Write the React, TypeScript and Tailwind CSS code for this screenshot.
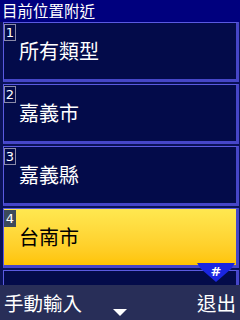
import React from "react";

const rows = [
  { n: "1", label: "所有類型" },
  { n: "2", label: "嘉義市" },
  { n: "3", label: "嘉義縣" },
  { n: "4", label: "台南市", active: true },
];

const font = { fontFamily: '"Noto Sans CJK TC", "Noto Sans", sans-serif' };

const Row = ({ n, label, active }: { n: string; label: string; active?: boolean }) => (
  <div
    className={`relative h-[60px] mb-[2px] ml-[3px] mr-[1px] border-t border-l border-[#5a5ae0] border-r-[3px] border-r-[#4646c8] border-b-[3px] border-b-[#4646c8] flex items-center ${
      active ? "bg-gradient-to-b from-[#ffe850] to-[#ffc400]" : "bg-[#030b4a]"
    }`}
  >
    <div
      className={`absolute left-0 top-[1px] w-[12px] h-[17px] flex items-center justify-center text-[13px] leading-none ${
        active ? "bg-[#3c4a5c] text-white" : "border border-[#8a8aa8] text-white"
      }`}
      style={{ fontFamily: '"DejaVu Sans", sans-serif' }}
    >
      {n}
    </div>
    <span
      className={`pl-[15px] text-[20px] leading-[24px] ${active ? "text-black" : "text-white"}`}
      style={font}
    >
      {label}
    </span>
  </div>
);

export default function App() {
  return (
    <div className="w-[240px] h-[320px] flex flex-col bg-[#0a1258] overflow-hidden" style={font}>
      <div className="h-[22px] shrink-0 bg-[#00007e] text-white text-[15.5px] leading-[20px] pl-[2px]">
        目前位置附近
      </div>
      <div className="relative flex-1 overflow-hidden">
        {rows.map((r) => (
          <Row key={r.n} {...r} />
        ))}
        <div className="h-[30px] ml-[3px] mr-[1px] border-t border-l border-[#5a5ae0] border-r-[3px] border-r-[#4646c8] bg-[#030b4a]" />
        <div className="absolute right-[5px] top-[241px] w-[38px] h-[20px]">
          <svg width="38" height="20" viewBox="0 0 38 20">
            <polygon points="0,0 38,0 34,6 19,19 4,6" fill="#1a26e0" />
            <text
              x="19"
              y="13"
              textAnchor="middle"
              fontSize="13"
              fontWeight="bold"
              fill="white"
              fontFamily="DejaVu Sans, sans-serif"
            >
              #
            </text>
          </svg>
        </div>
      </div>
      <div className="relative h-[35px] shrink-0 bg-[#282e58] flex items-center justify-between px-[4px] text-white text-[19.5px] leading-[24px]">
        <span>手動輸入</span>
        <span>退出</span>
        <svg className="absolute left-[113px] bottom-[4px]" width="14" height="7" viewBox="0 0 14 7">
          <polygon points="0,0 14,0 7,7" fill="white" />
        </svg>
      </div>
    </div>
  );
}
